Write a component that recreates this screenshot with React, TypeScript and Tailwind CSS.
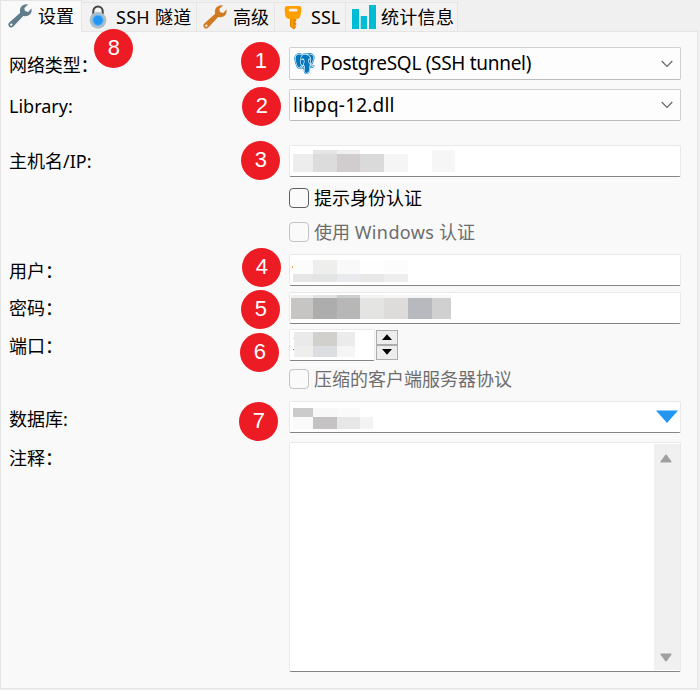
import type { ReactNode } from "react";
import { BiLogoPostgresql } from "react-icons/bi";

function Wrench({ color, hole }: { color: string; hole: string }) {
  return (
    <svg width="24" height="24" viewBox="0 0 24 24">
      <path
        d="M20 .4C17 -.2 13.8 1 12.5 3.7C11.7 5.5 11.8 7.2 12.2 8.8L1.3 18.4C0 19.6 0 21.5 1.2 22.7C2.4 23.9 4.3 23.8 5.4 22.5L15.2 11.9C17.2 12.6 19.5 12.3 21.4 10.8C23.4 9.2 24 6.6 23.4 4.6L20.2 7.9L17 7.1L16.3 4Z"
        fill={color}
      />
      <circle cx="3.3" cy="20.6" r="1.2" fill={hole} />
    </svg>
  );
}

function Lock() {
  return (
    <svg width="18" height="24" viewBox="0 0 18 24">
      <path d="M4.3 12V6.2a4.7 4.7 0 0 1 9.4 0V12" fill="none" stroke="#424242" strokeWidth="2" />
      <circle cx="9" cy="15.3" r="8.4" fill="#b0bec5" />
      <circle cx="9" cy="15.3" r="5.8" fill="#64b5f6" />
      <circle cx="9" cy="15.3" r="4.6" fill="#2196f3" />
    </svg>
  );
}

function Key() {
  return (
    <svg width="18" height="25" viewBox="0 0 18 25">
      <path d="M6 12h6.3v4l-1.3 1 1.3 1.2v1.6l-1.3 1 1.3 1.2L9.8 24.4 6 21.6Z" fill="#e68900" />
      <path d="M8.3 13v9.6" stroke="#ffa000" strokeWidth="1.5" />
      <path d="M3.5 1h11Q17.5 1 17.5 4L16.6 10Q16 14 12.5 14H5.8Q2 14 1.2 10L.6 4Q.6 1 3.5 1Z" fill="#ffa000" />
      <rect x="4.8" y="3.8" width="8.6" height="2.6" rx="1" fill="#f0f0f0" />
    </svg>
  );
}

function Bars() {
  return (
    <svg width="24" height="24" viewBox="0 0 24 24">
      <path d="M0 4h7v20H0zM8.7 11h6.3v13H8.7zM17 0h7v24h-7z" fill="#00bcd4" />
    </svg>
  );
}

function Tab({ className, children }: { className: string; children: ReactNode }) {
  return (
    <div className={`mt-[2px] flex h-[29px] shrink-0 items-center border-t border-r border-[#e5e5e5] bg-[#f2f2f2] ${className}`}>
      {children}
    </div>
  );
}

function Row({ label, className, labelClass = "", children }: { label?: string; className: string; labelClass?: string; children: ReactNode }) {
  return (
    <div className={`flex shrink-0 ${className}`}>
      <div className={`flex w-[280px] shrink-0 items-center whitespace-pre ${labelClass}`}>{label}</div>
      {children}
    </div>
  );
}

const field = "h-full shrink-0 overflow-hidden rounded-[2px] border border-[#e9e9e9] border-b-[#858585] bg-white";
const combo = "flex h-full w-[392px] shrink-0 items-center rounded-[2px] border border-[#d0d0d0] border-b-[#bcbcbc] bg-[#fdfdfd]";

function Chevron() {
  return (
    <svg className="mr-[7px] ml-auto" width="12" height="8" viewBox="0 0 12 8">
      <path d="M.7 1 6 6.3 11.3 1" fill="none" stroke="#666" strokeWidth="1.2" />
    </svg>
  );
}

function Check({ dim = false, children }: { dim?: boolean; children: ReactNode }) {
  return (
    <>
      <div className={`h-5 w-5 shrink-0 rounded-[4px] border bg-[#fafafa] ${dim ? "border-[#c3c3c3]" : "border-[#5f5f5f]"}`} />
      <span className={`ml-[5px] whitespace-nowrap ${dim ? "text-[#6d6d6d]" : ""}`}>{children}</span>
    </>
  );
}

function Mosaic({ rows, className }: { rows: { h: number; cells: [number, string][] }[]; className: string }) {
  return (
    <div className={className}>
      {rows.map((r, i) => (
        <div key={i} className="flex" style={{ height: r.h }}>
          {r.cells.map(([w, c], j) => (
            <div key={j} className="shrink-0" style={{ width: w, background: c }} />
          ))}
        </div>
      ))}
    </div>
  );
}

function Badge({ n, className }: { n: number; className: string }) {
  return (
    <div
      className={`absolute flex h-[39px] w-[39px] items-center justify-center rounded-full bg-[#ed1c24] font-['Liberation_Sans',sans-serif] text-[22px] leading-none text-white ${className}`}
    >
      {n}
    </div>
  );
}

export default function App() {
  return (
    <div className="relative flex h-[690px] w-[700px] flex-col overflow-hidden bg-[#f0f0f0] font-['Noto_Sans','Noto_Sans_CJK_SC',sans-serif] text-[18px] leading-[24px] text-black">
      <div className="z-10 flex h-[32px] shrink-0 whitespace-nowrap">
        <div className="flex w-[82px] shrink-0 items-center border border-b-0 border-[#e5e5e5] bg-[#f9f9f9] pb-[2px] pl-[7px]">
          <Wrench color="#607d8b" hole="#f9f9f9" />
          <span className="ml-[6px]">设置</span>
        </div>
        <Tab className="w-[115px] pl-[7px]">
          <Lock />
          <span className="ml-[9px] tracking-[0.3px]">SSH 隧道</span>
        </Tab>
        <Tab className="w-[78px] pl-[6px]">
          <Wrench color="#d17a22" hole="#f2f2f2" />
          <span className="ml-[6px]">高级</span>
        </Tab>
        <Tab className="w-[71px] pl-[9px]">
          <Key />
          <span className="ml-[9px]">SSL</span>
        </Tab>
        <Tab className="w-[112px] pl-[6px]">
          <Bars />
          <span className="ml-[5px] tracking-[0.3px]">统计信息</span>
        </Tab>
      </div>

      <div className="-mt-px flex h-[658px] w-[698px] shrink-0 flex-col border border-[#e5e5e5] bg-[#f9f9f9] pl-[8px]">
        <Row label="网络类型：" className="mt-[15px] h-[33px]" labelClass="pt-[2px] tracking-[-0.1px]">
          <div className={combo}>
            <BiLogoPostgresql className="ml-[2px] shrink-0" size={25} color="#0277bd" />
            <span className="ml-[3px] pb-px text-[19px] tracking-[-0.3px] whitespace-nowrap">PostgreSQL (SSH tunnel)</span>
            <Chevron />
          </div>
        </Row>
        <Row label="Library:" className="mt-[9px] h-[32px]" labelClass="pt-px">
          <div className={combo}>
            <span className="ml-[3px] text-[19px] tracking-[0.2px]">libpq-12.dll</span>
            <Chevron />
          </div>
        </Row>
        <Row label="主机名/IP:" className="mt-[24px] h-[32px]">
          <div className={`w-[392px] ${field}`}>
            <Mosaic
              className="mt-[4px] ml-[3px]"
              rows={[
                { h: 4, cells: [[20, "#fff"], [24, "#e5e5e5"], [23, "#f1f0f0"], [72, "#fff"], [23, "#f6f6f6"]] },
                { h: 18, cells: [[20, "#ededed"], [24, "#dddcdc"], [23, "#d1cdce"], [24, "#dadada"], [24, "#f5f5f5"], [24, "#fff"], [23, "#f6f6f6"]] },
              ]}
            />
          </div>
        </Row>
        <Row className="mt-[11px] h-[20px] items-center">
          <Check>提示身份认证</Check>
        </Row>
        <Row className="mt-[14px] h-[20px] items-center">
          <Check dim>
            使用 <span className="tracking-[0.4px]">Windows</span> 认证
          </Check>
        </Row>
        <Row label="用户：" className="mt-[12px] h-[32px]" labelClass="pt-px">
          <div className={`flex w-[392px] ${field}`}>
            <div className="mt-[11px] ml-[2px] h-[2px] w-px bg-[#d9a13c]" />
            <Mosaic
              className="mt-[5px]"
              rows={[
                { h: 14, cells: [[20, "#fcfcfc"], [24, "#eeeeec"], [23, "#f9f9f9"], [24, "#fefefe"], [24, "#fcfcfc"]] },
                { h: 8, cells: [[20, "#e6e6e6"], [24, "#e3e4e4"], [23, "#e9eaee"], [24, "#e7e7e7"], [24, "#eeeeee"]] },
              ]}
            />
          </div>
        </Row>
        <Row label="密码：" className="mt-[6px] h-[32px]">
          <div className={`w-[392px] ${field}`}>
            <Mosaic
              className="mt-[2px] ml-px"
              rows={[
                { h: 3, cells: [[22, "#f0f0f0"], [24, "#e2e2e2"], [23, "#cccfcf"], [24, "#f3f3f3"], [24, "#f6f6f6"], [24, "#f6f6f6"], [19, "#f9f9f9"]] },
                { h: 21, cells: [[22, "#c7c5c4"], [24, "#adadad"], [23, "#b7b7b7"], [24, "#e4e4e3"], [24, "#dddcdb"], [24, "#b7b9be"], [19, "#d0d0d0"]] },
              ]}
            />
          </div>
        </Row>
        <Row label="端口：" className="mt-[5px] h-[32px]" labelClass="pt-[2px]">
          <div className={`flex w-[86px] ${field}`}>
            <div className="ml-[3px] flex w-px flex-col">
              <div className="mt-[8px] h-px bg-[#f5cf8e]" />
              <div className="mt-[10px] h-px bg-[#a5713c]" />
            </div>
            <Mosaic
              className="mt-[2px]"
              rows={[
                { h: 14, cells: [[19, "#eaeaea"], [24, "#d1d0cc"], [18, "#ebebeb"]] },
                { h: 11, cells: [[19, "#eeeeec"], [24, "#dcdde1"], [18, "#f5f5f5"]] },
              ]}
            />
          </div>
          <div className="mt-px ml-px flex h-[30px] w-[22px] flex-col">
            <div className="flex h-[15px] items-center justify-center border border-[#adadad] bg-[#ededed] pb-px">
              <svg width="10" height="6" viewBox="0 0 10 6"><path d="M5 .3 10 6H0Z" fill="#000" /></svg>
            </div>
            <div className="flex h-[15px] items-center justify-center border border-[#adadad] bg-[#ededed] pb-px">
              <svg width="10" height="6" viewBox="0 0 10 6"><path d="M0 0h10L5 5.7Z" fill="#000" /></svg>
            </div>
          </div>
        </Row>
        <Row className="mt-[8px] h-[20px] items-center">
          <Check dim>压缩的客户端服务器协议</Check>
        </Row>
        <Row label="数据库:" className="mt-[12px] h-[32px]" labelClass="pt-[3px]">
          <div className={`flex w-[392px] justify-between ${field}`}>
            <Mosaic
              className="mt-[6px] ml-[3px]"
              rows={[
                { h: 9, cells: [[20, "#cccbcc"], [24, "#f8f8f8"], [23, "#fafafa"]] },
                { h: 12, cells: [[20, "#fafafa"], [24, "#c5c2c3"], [23, "#e7e7e7"], [13, "#f3f3f3"]] },
              ]}
            />
            <svg className="mt-[8px] mr-[2px]" width="22" height="13" viewBox="0 0 22 13">
              <path d="M0 .5h22L11 13Z" fill="#2196f3" />
            </svg>
          </div>
        </Row>
        <Row label="注释：" className="mt-[9px] h-[230px]" labelClass="h-[32px]">
          <div className={`flex w-[392px] justify-end p-px pr-0 ${field}`}>
            <div className="flex w-[26px] flex-col items-center justify-between bg-[#f0f0f0] pt-[10px] pr-[2px] pb-[8px]">
              <svg width="12" height="9" viewBox="0 0 12 9"><path d="M6 1.2 10.8 7.8H1.2Z" fill="#a0a0a0" stroke="#a0a0a0" strokeWidth="1.5" strokeLinejoin="round" /></svg>
              <svg width="12" height="9" viewBox="0 0 12 9"><path d="M6 7.8 10.8 1.2H1.2Z" fill="#a0a0a0" stroke="#a0a0a0" strokeWidth="1.5" strokeLinejoin="round" /></svg>
            </div>
          </div>
        </Row>
      </div>

      <Badge n={1} className="top-[41.5px] left-[241.4px]" />
      <Badge n={2} className="top-[86.5px] left-[242.4px]" />
      <Badge n={3} className="top-[140.5px] left-[241.4px]" />
      <Badge n={4} className="top-[247.5px] left-[242.4px]" />
      <Badge n={5} className="top-[289.5px] left-[241.4px]" />
      <Badge n={6} className="top-[332.5px] left-[240.4px]" />
      <Badge n={7} className="top-[401.5px] left-[239.4px]" />
      <Badge n={8} className="top-[28.5px] left-[94.4px] z-20" />
    </div>
  );
}
